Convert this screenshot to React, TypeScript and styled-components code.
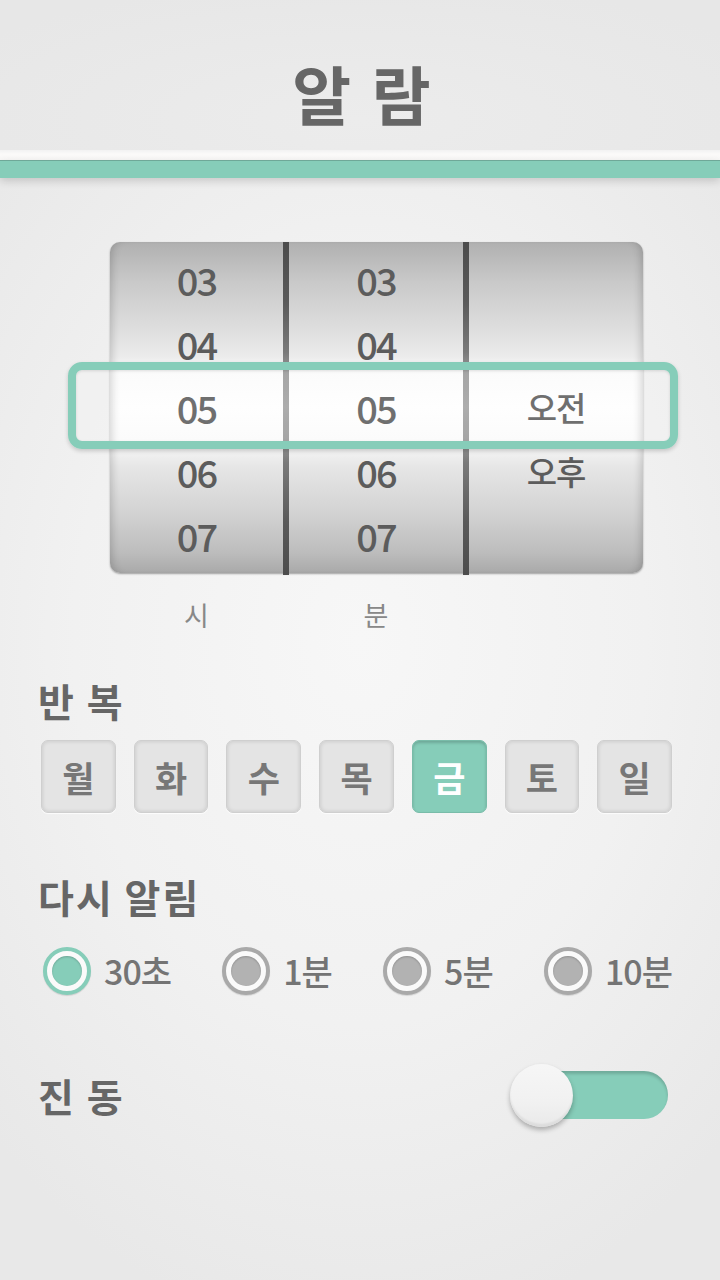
import React from "react";
import styled, { createGlobalStyle } from "styled-components";

const TEAL = "#86cdb9";
const FONT = `"Noto Sans CJK KR", "Noto Sans", sans-serif`;

const Global = createGlobalStyle`
  html, body { margin: 0; padding: 0; }
  body {
    width: 720px;
    height: 1280px;
    overflow: hidden;
    font-family: ${FONT};
    background: #eaeaea;
  }
`;

const Page = styled.div`
  width: 720px;
  height: 1280px;
  background: radial-gradient(ellipse 520px 700px at 360px 640px, #f7f7f7 0%, #f1f1f1 55%, #e8e8e8 100%);
  display: flex;
  flex-direction: column;
`;

const Header = styled.header`
  height: 150px;
  background: radial-gradient(ellipse 460px 140px at 360px 120px, #ececec 0%, #e7e7e7 100%);
  display: flex;
  justify-content: center;
  align-items: flex-start;
  padding-top: 49px;
  padding-left: 6px;
  box-sizing: border-box;
`;

const Title = styled.h1`
  margin: 0;
  font-size: 64px;
  line-height: 86px;
  font-weight: 700;
  color: #666;
  letter-spacing: 3px;
`;

const Shine = styled.div`
  height: 10px;
  background: linear-gradient(#f2f2f2, #fbfaf9 40%, #faf9f8);
`;

const TealBar = styled.div`
  height: 18px;
  background: ${TEAL};
  border-top: 1px solid #6fa898;
  box-sizing: border-box;
  box-shadow: 0 3px 8px rgba(0, 0, 0, 0.16);
  position: relative;
  z-index: 1;
`;

const Picker = styled.div`
  position: relative;
  margin: 64px 0 0 110px;
  width: 533px;
  height: 331px;
  border-radius: 10px;
  display: grid;
  grid-template-columns: 173px 6px 174px 6px 174px;
  background: linear-gradient(
    #b0b0b0 0px,
    #c9c9c9 40px,
    #dddddd 85px,
    #ececec 115px,
    #fbfbfb 128px,
    #fefefe 165px,
    #fbfbfb 198px,
    #e6e6e6 225px,
    #d3d3d3 270px,
    #bdbdbd 310px,
    #a9a9a9 331px
  );
  box-shadow: 0 1px 2px rgba(0, 0, 0, 0.35), inset 8px 0 8px -6px rgba(0, 0, 0, 0.18),
    inset -8px 0 8px -6px rgba(0, 0, 0, 0.18);
`;

const Column = styled.div`
  display: flex;
  flex-direction: column;
  padding-top: 5px;
`;

const Cell = styled.div<{ $kr?: boolean }>`
  height: 64px;
  display: flex;
  align-items: center;
  justify-content: center;
  font-size: ${(p) => (p.$kr ? "33px" : "38px")};
  letter-spacing: ${(p) => (p.$kr ? "-1px" : "-2px")};
  color: #5c5c5c;
  font-weight: 500;
`;

const Divider = styled.div`
  height: 333px;
  background: linear-gradient(
    #4c4c4c 0px,
    #5a5a5a 60px,
    #7a7a7a 110px,
    #999 130px,
    #a2a2a2 165px,
    #999 198px,
    #7a7a7a 220px,
    #5a5a5a 280px,
    #4c4c4c 333px
  );
`;

const Frame = styled.div`
  position: absolute;
  left: -42px;
  top: 120px;
  width: 610px;
  height: 87px;
  box-sizing: border-box;
  border: 8px solid ${TEAL};
  border-radius: 14px;
  background: rgba(255, 255, 255, 0.12);
  box-shadow: 0 2px 4px rgba(0, 0, 0, 0.18), inset 0 1px 3px rgba(0, 0, 0, 0.12);
  pointer-events: none;
`;

const UnitRow = styled.div`
  margin: 22px 0 0 110px;
  width: 533px;
  display: grid;
  grid-template-columns: 173px 6px 174px 6px 174px;
`;

const Unit = styled.div<{ $col: number }>`
  grid-column: ${(p) => p.$col};
  text-align: center;
  font-size: 27px;
  line-height: 40px;
  color: #888;
`;

const Section = styled.section<{ $top: number }>`
  margin-top: ${(p) => p.$top}px;
  padding: 0 48px 0 38px;
`;

const SectionTitle = styled.h2`
  margin: 0;
  font-size: 39px;
  line-height: 48px;
  font-weight: 700;
  color: #666;
  letter-spacing: 2px;
`;

const DayRow = styled.div`
  margin-top: 16px;
  padding-left: 3px;
  display: flex;
  gap: 18px;
`;

const DayButton = styled.div<{ $on?: boolean }>`
  width: 75px;
  height: 73px;
  box-sizing: border-box;
  border-radius: 7px;
  display: flex;
  align-items: center;
  justify-content: center;
  font-size: 35px;
  font-weight: 700;
  color: ${(p) => (p.$on ? "#fff" : "#777")};
  background: ${(p) => (p.$on ? TEAL : "#e4e4e4")};
  border: 1px solid ${(p) => (p.$on ? "#79bca9" : "#cfcfcf")};
  box-shadow: ${(p) =>
    p.$on
      ? "inset 0 2px 3px rgba(0,0,0,0.18)"
      : "inset 0 0 4px rgba(0,0,0,0.14), 0 1px 1px rgba(255,255,255,0.8)"};
`;

const RadioRow = styled.div`
  margin-top: 21px;
  height: 60px;
  padding-left: 5px;
  padding-right: 0;
  display: flex;
  align-items: center;
  justify-content: space-between;
`;

const RadioItem = styled.div`
  display: flex;
  align-items: center;
  gap: 13px;
`;

const RadioOuter = styled.span<{ $on?: boolean }>`
  width: 48px;
  height: 48px;
  box-sizing: border-box;
  border-radius: 50%;
  border: 4px solid ${(p) => (p.$on ? TEAL : "#a9a9a9")};
  background: #fafafa;
  display: flex;
  align-items: center;
  justify-content: center;
  box-shadow: 0 1px 1px rgba(0, 0, 0, 0.12);
`;

const RadioDot = styled.span<{ $on?: boolean }>`
  width: 30px;
  height: 30px;
  border-radius: 50%;
  background: ${(p) => (p.$on ? TEAL : "#b2b2b2")};
  box-shadow: inset 0 1px 2px rgba(0, 0, 0, 0.2);
`;

const RadioLabel = styled.span`
  font-size: 34px;
  line-height: 44px;
  font-weight: 500;
  color: #747474;
  letter-spacing: -1px;
`;

const ToggleRow = styled.div`
  margin-top: 59px;
  height: 70px;
  padding: 0 52px 0 38px;
  display: flex;
  align-items: center;
  justify-content: space-between;
`;

const Toggle = styled.div`
  position: relative;
  width: 158px;
  height: 63px;
  display: flex;
  align-items: center;
  justify-content: flex-end;
`;

const Track = styled.div`
  width: 138px;
  height: 48px;
  border-radius: 24px;
  background: ${TEAL};
  box-shadow: inset 0 3px 3px rgba(0, 0, 0, 0.16);
`;

const Thumb = styled.div`
  position: absolute;
  left: 0;
  top: 0;
  width: 63px;
  height: 63px;
  border-radius: 50%;
  background: linear-gradient(#f6f6f6, #f1f1f1 60%, #e9e9e9);
  box-shadow: 0 3px 5px rgba(0, 0, 0, 0.28), inset 0 -3px 2px rgba(0, 0, 0, 0.06);
`;

const hours = ["03", "04", "05", "06", "07"];
const days = ["월", "화", "수", "목", "금", "토", "일"];
const snooze = ["30초", "1분", "5분", "10분"];

export default function App() {
  return (
    <>
      <Global />
      <Page>
        <Header>
          <Title>알 람</Title>
        </Header>
        <Shine />
        <TealBar />

        <Picker>
          <Column>
            {hours.map((h) => (
              <Cell key={h}>{h}</Cell>
            ))}
          </Column>
          <Divider />
          <Column>
            {hours.map((h) => (
              <Cell key={h}>{h}</Cell>
            ))}
          </Column>
          <Divider />
          <Column>
            <Cell $kr />
            <Cell $kr />
            <Cell $kr>오전</Cell>
            <Cell $kr>오후</Cell>
            <Cell $kr />
          </Column>
          <Frame />
        </Picker>
        <UnitRow>
          <Unit $col={1}>시</Unit>
          <Unit $col={3}>분</Unit>
        </UnitRow>

        <Section $top={41}>
          <SectionTitle>반 복</SectionTitle>
          <DayRow>
            {days.map((d) => (
              <DayButton key={d} $on={d === "금"}>
                {d}
              </DayButton>
            ))}
          </DayRow>
        </Section>

        <Section $top={59}>
          <SectionTitle>다시 알림</SectionTitle>
          <RadioRow>
            {snooze.map((s, i) => (
              <RadioItem key={s}>
                <RadioOuter $on={i === 0}>
                  <RadioDot $on={i === 0} />
                </RadioOuter>
                <RadioLabel>{s}</RadioLabel>
              </RadioItem>
            ))}
          </RadioRow>
        </Section>

        <ToggleRow>
          <SectionTitle>진 동</SectionTitle>
          <Toggle>
            <Track />
            <Thumb />
          </Toggle>
        </ToggleRow>
      </Page>
    </>
  );
}
